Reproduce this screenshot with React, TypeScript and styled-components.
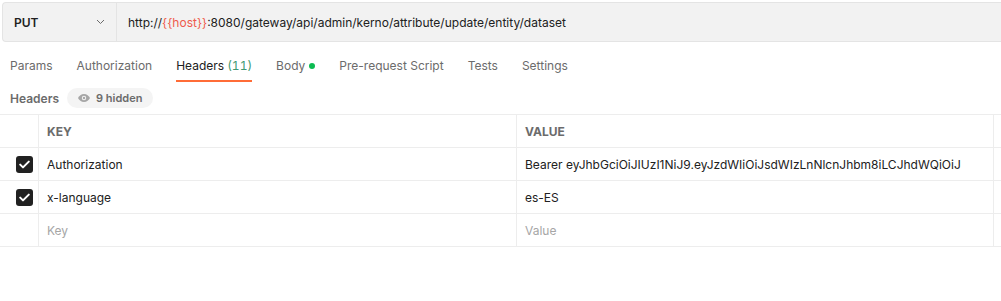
import React from "react";
import styled, { createGlobalStyle } from "styled-components";

const Global = createGlobalStyle`
  html, body { margin: 0; padding: 0; background: #ffffff; }
  body { font-family: Inter, "Noto Sans", sans-serif; color: #212121; overflow: hidden; }
  * { box-sizing: border-box; }
`;

const Page = styled.div`
  width: 1001px;
  height: 301px;
  padding-top: 2px;
  display: flex;
  flex-direction: column;
`;

const UrlBar = styled.div`
  margin-left: 2px;
  height: 40px;
  display: flex;
  background: #f2f2f2;
  border: 1px solid #e4e4e4;
  border-right: none;
  border-radius: 4px 0 0 4px;
`;

const Method = styled.div`
  width: 114px;
  display: flex;
  align-items: center;
  justify-content: space-between;
  padding: 0 11px 0 11px;
  border-right: 1px solid #e4e4e4;
  font-size: 12px;
  font-weight: 600;
  color: #212121;
`;

const UrlText = styled.div`
  display: flex;
  align-items: center;
  padding-left: 11px;
  font-size: 12px;
  color: #212121;
  white-space: nowrap;
`;

const Variable = styled.span`
  color: #ef5a4c;
`;

const Tabs = styled.div`
  display: flex;
  gap: 24px;
  padding-left: 10px;
  margin-top: 6px;
`;

const Tab = styled.div<{ $active?: boolean }>`
  padding: 10px 0 6px;
  line-height: 16px;
  font-size: 12px;
  color: ${(p) => (p.$active ? "#212121" : "#6b6b6b")};
  border-bottom: 2px solid ${(p) => (p.$active ? "#ff6c37" : "transparent")};
  display: flex;
  align-items: center;
  white-space: nowrap;
`;

const Count = styled.span`
  color: #3f9a72;
  margin-left: 3px;
  font-variant-numeric: tabular-nums;
`;

const Dot = styled.span`
  width: 6px;
  height: 6px;
  border-radius: 50%;
  background: #0cbb52;
  margin-left: 4px;
`;

const SubHeader = styled.div`
  display: flex;
  align-items: center;
  gap: 8px;
  padding-left: 10px;
  margin-top: 6px;
  height: 20px;
`;

const SubLabel = styled.div`
  font-size: 12px;
  font-weight: 600;
  color: #6b6b6b;
`;

const Pill = styled.div`
  height: 20px;
  display: flex;
  align-items: center;
  gap: 6px;
  padding: 0 11px 0 11px;
  background: #f4f4f4;
  border-radius: 10px;
  font-size: 11px;
  font-weight: 600;
  color: #6b6b6b;
`;

const Table = styled.div`
  margin-top: 6px;
  border-top: 1px solid #ededed;
  display: grid;
  grid-template-columns: 39px 478px 477px 1fr;
`;

const Cell = styled.div<{ $head?: boolean; $placeholder?: boolean }>`
  height: 33px;
  border-bottom: 1px solid #ededed;
  border-right: 1px solid #ededed;
  display: flex;
  align-items: center;
  padding-left: 8px;
  font-size: 12px;
  font-weight: ${(p) => (p.$head ? 700 : 400)};
  color: ${(p) => (p.$head ? "#6b6b6b" : p.$placeholder ? "#a6a6a6" : "#212121")};
  white-space: nowrap;
  overflow: hidden;
  &:nth-child(4n) {
    border-right: none;
  }
`;

const CheckCell = styled(Cell)`
  padding-left: 16px;
`;

const Box = styled.div`
  width: 17px;
  height: 17px;
  border-radius: 3px;
  background: #212121;
  display: flex;
  align-items: center;
  justify-content: center;
`;

const Chevron = () => (
  <svg width="9" height="6" viewBox="0 0 9 6" fill="none">
    <path d="M1 1l3.5 3.5L8 1" stroke="#6b6b6b" strokeWidth="1" />
  </svg>
);

const Eye = () => (
  <svg width="12" height="8" viewBox="0 0 12 8">
    <path d="M6 0C3.2 0 1.1 1.8 0 4c1.1 2.2 3.2 4 6 4s4.9-1.8 6-4C10.9 1.8 8.8 0 6 0z" fill="#a6a6a6" />
    <circle cx="6" cy="4" r="2.2" fill="#f4f4f4" />
    <circle cx="6" cy="4" r="1.2" fill="#a6a6a6" />
  </svg>
);

const Check = () => (
  <svg width="11" height="9" viewBox="0 0 11 9" fill="none">
    <path d="M1.2 4.6l2.8 2.8L9.8 1.6" stroke="#ffffff" strokeWidth="2" strokeLinecap="round" strokeLinejoin="round" />
  </svg>
);

const rows = [
  { key: "Authorization", value: "Bearer eyJhbGciOiJIUzI1NiJ9.eyJzdWIiOiJsdWIzLnNlcnJhbm8iLCJhdWQiOiJ", checked: true },
  { key: "x-language", value: "es-ES", checked: true },
];

export default function App() {
  return (
    <>
      <Global />
      <Page>
        <UrlBar>
          <Method>
            <span>PUT</span>
            <Chevron />
          </Method>
          <UrlText>
            http://<Variable>{"{{host}}"}</Variable>:8080/gateway/api/admin/kerno/attribute/update/entity/dataset
          </UrlText>
        </UrlBar>
        <Tabs>
          <Tab>Params</Tab>
          <Tab>Authorization</Tab>
          <Tab $active>
            Headers<Count>(11)</Count>
          </Tab>
          <Tab>
            Body<Dot />
          </Tab>
          <Tab>Pre-request Script</Tab>
          <Tab>Tests</Tab>
          <Tab>Settings</Tab>
        </Tabs>
        <SubHeader>
          <SubLabel>Headers</SubLabel>
          <Pill>
            <Eye />
            9 hidden
          </Pill>
        </SubHeader>
        <Table>
          <Cell $head />
          <Cell $head>KEY</Cell>
          <Cell $head>VALUE</Cell>
          <Cell $head />
          {rows.map((r) => (
            <React.Fragment key={r.key}>
              <CheckCell>
                <Box>
                  <Check />
                </Box>
              </CheckCell>
              <Cell>{r.key}</Cell>
              <Cell>{r.value}</Cell>
              <Cell />
            </React.Fragment>
          ))}
          <Cell />
          <Cell $placeholder>Key</Cell>
          <Cell $placeholder>Value</Cell>
          <Cell />
        </Table>
      </Page>
    </>
  );
}
